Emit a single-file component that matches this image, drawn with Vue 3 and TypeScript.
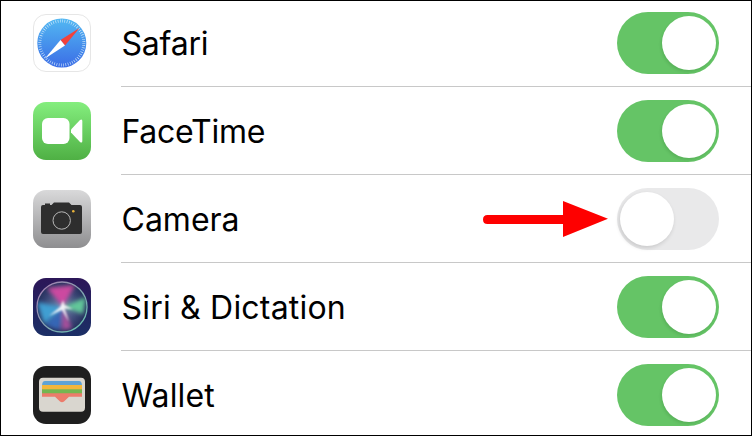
<template>
  <div class="frame">
    <ul class="list">
      <li v-for="app in apps" :key="app.name" class="row">
        <!-- app icons, all on a 58 box -->
        <svg class="icon" viewBox="0 0 58 58">
          <template v-if="app.icon === 'safari'">
            <defs>
              <linearGradient id="safariFace" x1="0" y1="0" x2="0" y2="1">
                <stop offset="0" stop-color="#52b8f2" />
                <stop offset="1" stop-color="#3b6de6" />
              </linearGradient>
            </defs>
            <rect x="0.5" y="0.5" width="57" height="57" rx="12.5" fill="#fff" stroke="#e6e6e6" />
            <circle cx="28.800" cy="29" r="24.500" fill="url(#safariFace)" />
            <circle cx="28.800" cy="29" r="22" fill="none" stroke="#d8ecfb" stroke-width="3" stroke-dasharray="0.6 1.7" />
            <polygon points="46.500,14 32,31.500 27.500,26" fill="#f2413b" />
            <polygon points="12,44.500 27.500,26 32,31.500" fill="#fff" />
          </template>

          <template v-else-if="app.icon === 'facetime'">
            <defs>
              <linearGradient id="ftBg" x1="0" y1="0" x2="0" y2="1">
                <stop offset="0" stop-color="#84ee7e" />
                <stop offset="1" stop-color="#4fb044" />
              </linearGradient>
            </defs>
            <rect width="58" height="58" rx="13" fill="url(#ftBg)" />
            <rect x="9" y="16" width="27.500" height="26" rx="6" fill="#fff" />
            <path d="M38 27.500 L47 18 Q49.300 16.500 49.300 19 V39 Q49.300 41.500 47 40 L38 30.500 Z" fill="#fff" />
          </template>

          <template v-else-if="app.icon === 'camera'">
            <defs>
              <linearGradient id="camBg" x1="0" y1="0" x2="0" y2="1">
                <stop offset="0" stop-color="#d9d9da" />
                <stop offset="1" stop-color="#8e8e90" />
              </linearGradient>
            </defs>
            <rect width="58" height="58" rx="13" fill="url(#camBg)" />
            <path d="M10 15 Q8 15 8 17 V42 Q8 44 10 44 H47 Q49 44 49 42 V17 Q49 15 47 15 H38.500 L36 12.500 H21 L18.500 15 Z" fill="#2e2e2e" />
            <rect x="12" y="13.500" width="5" height="2" fill="#2e2e2e" />
            <circle cx="28.700" cy="30.500" r="8.700" fill="none" stroke="#b8b8b8" stroke-width="1" />
            <circle cx="40.300" cy="21.300" r="1.300" fill="#e8b23a" />
          </template>

          <template v-else-if="app.icon === 'siri'">
            <defs>
              <linearGradient id="siriBg" x1="0" y1="0" x2="0" y2="1">
                <stop offset="0" stop-color="#2c1658" />
                <stop offset="1" stop-color="#1b2f66" />
              </linearGradient>
              <radialGradient id="siriOrb" cx="0.5" cy="0.5" r="0.55">
                <stop offset="0" stop-color="#6f86ad" />
                <stop offset="0.7" stop-color="#35406f" />
                <stop offset="1" stop-color="#1d2a55" />
              </radialGradient>
              <linearGradient id="siriRing" x1="0" y1="0" x2="1" y2="1">
                <stop offset="0" stop-color="#a97ab0" />
                <stop offset="1" stop-color="#62c6b0" />
              </linearGradient>
              <filter id="siriBlur"><feGaussianBlur stdDeviation="2" /></filter>
              <filter id="siriSoft"><feGaussianBlur stdDeviation="0.9" /></filter>
              <clipPath id="siriClip"><circle cx="29" cy="29" r="24.500" /></clipPath>
            </defs>
            <rect width="58" height="58" rx="13" fill="url(#siriBg)" />
            <circle cx="29" cy="29" r="25" fill="url(#siriOrb)" stroke="url(#siriRing)" stroke-width="1.300" />
            <g filter="url(#siriBlur)" clip-path="url(#siriClip)">
              <polygon points="30,29 14,10 42,7" fill="#cc4aa0" />
              <polygon points="30,29 4,24 11,46" fill="#3f9fd2" />
              <polygon points="30,29 53,19 50,36" fill="#62c89a" />
              <polygon points="30,29 12,47 27,52" fill="#3466b6" />
              <polygon points="30,29 29,52 39,50" fill="#a84f9c" />
            </g>
            <g filter="url(#siriSoft)">
              <polygon points="30,22 31.500,27 40,31 31.500,30.500 36,44 29,32 16,38 27.500,28.500" fill="#fff" opacity="0.9" />
            </g>
          </template>

          <template v-else>
            <rect width="58" height="58" rx="13" fill="#1f1f1f" />
            <rect x="6" y="11.700" width="46" height="34" rx="4" fill="#d9d6cf" />
            <path d="M9 20 Q9 15 12 15 H46 Q49 15 49 20 Z" fill="#5ea3d6" />
            <rect x="9" y="19" width="40" height="5" fill="#f2b63c" />
            <rect x="9" y="23.300" width="40" height="5" fill="#74b651" />
            <path d="M9 27.300 H49 V30.700 H36 L31 35.500 Q29 37 27 35.500 L22 30.700 H9 Z" fill="#ec7b6b" />
          </template>
        </svg>

        <div class="row-body">
          <span class="label" :style="{ letterSpacing: app.tracking + 'px' }">{{ app.name }}</span>
          <div class="toggle" :class="{ on: app.on }">
            <span class="thumb"></span>
          </div>
        </div>
      </li>
    </ul>

    <!-- annotation arrow drawn over the screenshot -->
    <svg class="arrow" width="130" height="40" viewBox="0 0 130 40">
      <path d="M4.500 15 H80 V1 L125 18.700 L80 37 V24 H4.500 Q0 24 0 19.500 Q0 15 4.500 15 Z" fill="#fe0000" />
    </svg>
  </div>
</template>

<script setup lang="ts">
interface AppRow {
  name: string
  icon: string
  on: boolean
  tracking: number
}

const apps: AppRow[] = [
  { name: 'Safari', icon: 'safari', on: true, tracking: -0.2 },
  { name: 'FaceTime', icon: 'facetime', on: true, tracking: -0.25 },
  { name: 'Camera', icon: 'camera', on: false, tracking: 0 },
  { name: 'Siri & Dictation', icon: 'siri', on: true, tracking: 0.2 },
  { name: 'Wallet', icon: 'wallet', on: true, tracking: 0.15 },
]
</script>

<style>
html,
body {
  margin: 0;
  background: #fff;
}
</style>

<style scoped>
.frame {
  position: relative;
  box-sizing: border-box;
  width: 752px;
  height: 436px;
  border: 1px solid #000;
  background: #fff;
  overflow: hidden;
  font-family: Inter, "Liberation Sans", sans-serif;
}

.list {
  list-style: none;
  margin: -2px 0 0;
  padding: 0;
}

.row {
  display: flex;
  align-items: center;
  gap: 30px;
  height: 88px;
  padding-left: 32px;
}

.icon {
  flex: none;
  width: 58px;
  height: 58px;
}

.row-body {
  flex: 1;
  box-sizing: border-box;
  height: 88px;
  padding: 1px 32px 0 0;
  display: flex;
  align-items: center;
  justify-content: space-between;
  border-bottom: 1px solid #c8c8c8;
}

.label {
  font-size: 32px;
  color: #000;
  margin-left: 0.5px;
}

.toggle {
  box-sizing: border-box;
  width: 102px;
  height: 62px;
  padding: 4px 3px;
  border-radius: 31px;
  background: #e9e9ea;
  display: flex;
  justify-content: flex-start;
}

.toggle.on {
  background: #65c466;
  justify-content: flex-end;
}

.thumb {
  width: 54px;
  height: 54px;
  border-radius: 50%;
  background: #fff;
  box-shadow: -1px 2px 4px rgba(0, 0, 0, 0.14);
}

.toggle.on .thumb {
  box-shadow: -1px 2px 3px rgba(0, 60, 0, 0.12);
}

.arrow {
  position: absolute;
  left: 482px;
  top: 199px;
}
</style>
